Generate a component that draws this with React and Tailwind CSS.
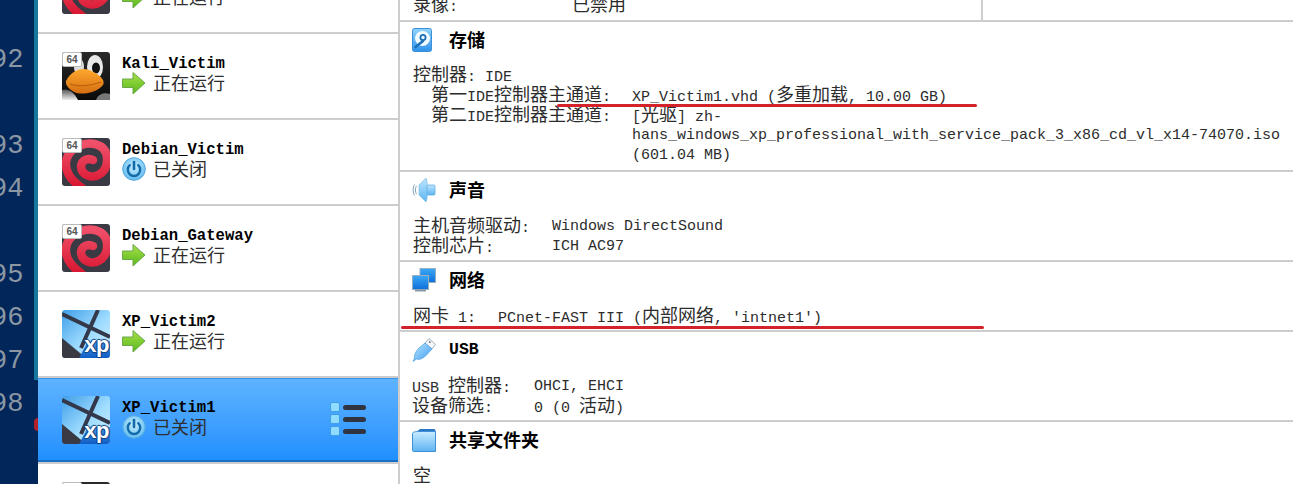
import React from "react";

const MONO = "font-['Liberation_Mono',monospace]";

function T({ s, bold }) {
  const parts = s.split(/([\u3000-\uffff]+)/).filter(Boolean);
  return parts.map((p, i) =>
    /[\u3000-\uffff]/.test(p) ? (
      <span key={i} className={`font-['Noto_Sans_CJK_SC',sans-serif] text-[18px] ${bold ? "font-bold" : "font-normal"}`}>{p}</span>
    ) : (
      <span key={i} className={`${MONO} ${bold ? "text-[16.5px] font-bold" : "text-[15px] font-normal"}`}>{p}</span>
    )
  );
}

function Line({ children, label, value, labelW, indent }) {
  return (
    <div className={`h-5 leading-5 whitespace-pre flex overflow-visible text-[#2c2c2c] ${indent ? "pl-[18px]" : ""}`}>
      {label !== undefined && <div className={labelW}><T s={label} /></div>}
      <div><T s={value !== undefined ? value : children} /></div>
    </div>
  );
}

function Badge() {
  return (
    <div className="absolute left-0 top-0 w-5 h-[15px] bg-white border border-[#bbb] rounded-[2px] flex items-center justify-center text-[10px] font-bold text-[#555] font-['Liberation_Sans',sans-serif] leading-none">
      64
    </div>
  );
}

function Debian() {
  return (
    <div className="relative w-12 h-12 shrink-0">
      <svg width="48" height="48" viewBox="0 0 48 48">
        <defs>
          <linearGradient id="deb" x1="0" y1="0" x2="0" y2="1">
            <stop offset="0" stopColor="#f0506a" />
            <stop offset="1" stopColor="#d8142f" />
          </linearGradient>
        </defs>
        <rect width="48" height="48" rx="3" fill="#3a3a44" />
        <path d="M20 50C8 42 1 31 5 20C9 8 27 2 38 8C48 14 47 30 38 36C31 41 20 38 19 29C19 23 25 19 31 22" fill="none" stroke="url(#deb)" strokeWidth="8.5" strokeLinecap="round" />
      </svg>
      <Badge />
    </div>
  );
}

function Kali() {
  return (
    <div className="relative w-12 h-12 shrink-0">
      <svg width="48" height="48" viewBox="0 0 48 48">
        <defs>
          <linearGradient id="bk" x1="0" y1="0" x2="0" y2="1">
            <stop offset="0" stopColor="#2a2a2a" />
            <stop offset="1" stopColor="#0a0a0a" />
          </linearGradient>
          <linearGradient id="bk2" x1="0" y1="0" x2="0" y2="1">
            <stop offset="0" stopColor="#ffa92e" />
            <stop offset="1" stopColor="#d46d10" />
          </linearGradient>
          <linearGradient id="wh" x1="0" y1="0" x2="0" y2="1">
            <stop offset="0" stopColor="#555" />
            <stop offset="1" stopColor="#eee" />
          </linearGradient>
        </defs>
        <rect width="48" height="48" rx="3" fill="url(#bk)" />
        <path d="M0 38C6 36 12 40 16 48H0Z" fill="url(#wh)" />
        <path d="M48 42C42 40 36 42 34 48H48Z" fill="#777" />
        <ellipse cx="33" cy="15" rx="8" ry="12" fill="#e8e8e8" />
        <ellipse cx="34" cy="16" rx="4" ry="5.5" fill="#111" />
        <ellipse cx="17" cy="15" rx="5" ry="9" fill="#ddd" />
        <path d="M4 29C9 19 19 15 27 18C35 21 44 27 41 33C36 40 20 44 12 40C8 38 3 33 4 29Z" fill="url(#bk2)" />
        <path d="M8 32C16 35 28 34 39 30" fill="none" stroke="#b85a0a" strokeWidth="1" />
      </svg>
      <Badge />
    </div>
  );
}

function Xp() {
  return (
    <div className="relative w-12 h-12 shrink-0">
      <svg width="48" height="48" viewBox="0 0 48 48">
        <defs>
          <linearGradient id="xpb" x1="0" y1="0" x2="1" y2="1">
            <stop offset="0" stopColor="#3f9fe8" />
            <stop offset="0.55" stopColor="#9fdcff" />
            <stop offset="1" stopColor="#d8f2ff" />
          </linearGradient>
          <linearGradient id="xpc" x1="0" y1="0" x2="0" y2="1">
            <stop offset="0" stopColor="#4a9fe8" />
            <stop offset="1" stopColor="#0f5cc4" />
          </linearGradient>
        </defs>
        <rect width="48" height="48" rx="3" fill="url(#xpb)" />
        <path d="M0 28L24 48H3C1 48 0 47 0 45Z" fill="#3a3a44" />
        <path d="M0 4L48 27" stroke="#33384a" strokeWidth="4" />
        <path d="M36 0L19 38" stroke="#33384a" strokeWidth="4" />
        <path d="M17 48L25 33C32 30 42 30 48 31V45C48 47 47 48 45 48Z" fill="url(#xpc)" />
      </svg>
      <span className="absolute right-[1px] bottom-[4px] text-white font-bold text-[22px] leading-[18px] tracking-[-0.5px] font-['Liberation_Sans',sans-serif] [text-shadow:1px_0_1px_#0f3f80,-1px_0_1px_#0f3f80,0_1px_1px_#0f3f80,0_-1px_1px_#0f3f80]">xp</span>
    </div>
  );
}

function Running() {
  return (
    <svg width="24" height="24" viewBox="0 0 24 24">
      <defs>
        <linearGradient id="ar" x1="0" y1="0" x2="0" y2="1">
          <stop offset="0" stopColor="#a8e04a" />
          <stop offset="1" stopColor="#58b81c" />
        </linearGradient>
      </defs>
      <path d="M0.5 8H11V1.5L23 12L11 23V16.5H0.5Z" fill="url(#ar)" stroke="#6aa84a" strokeWidth="1" strokeLinejoin="round" />
    </svg>
  );
}

function Off() {
  return (
    <svg width="24" height="24" viewBox="0 0 24 24">
      <defs>
        <radialGradient id="pw" cx="0.5" cy="0.4" r="0.6">
          <stop offset="0" stopColor="#c8eeff" />
          <stop offset="1" stopColor="#62bcf0" />
        </radialGradient>
      </defs>
      <circle cx="12" cy="12" r="11.3" fill="url(#pw)" stroke="#52a8dc" strokeWidth="1" />
      <path d="M7.8 8.2A6.2 6.2 0 1 0 16.2 8.2" fill="none" stroke="#126aa8" strokeWidth="2.4" strokeLinecap="round" />
      <path d="M12 5V12" stroke="#126aa8" strokeWidth="2.6" strokeLinecap="round" />
    </svg>
  );
}

function Details() {
  return (
    <div className="flex flex-col gap-[2px]">
      {[0, 1, 2].map((i) => (
        <div key={i} className="flex items-center gap-[3px]">
          <div className="w-[10px] h-[10px] rounded-[2px] bg-[#8fdcff] border border-[#3f9ee6]" />
          <div className="w-[23px] h-[5px] rounded-[3px] bg-[#2f3440]" />
        </div>
      ))}
    </div>
  );
}

function Row({ name, status, icon, selected }) {
  return (
    <div className={selected
      ? "h-[84px] border-t border-t-[#3a94e8] border-b-2 border-b-[#1570c8] bg-gradient-to-b from-[#5eb3ff] to-[#1f8fff] pl-6 pt-[17px] flex relative"
      : "h-[86px] border-b-2 border-b-[#cdcdcd] pl-6 pt-[18px] flex"}>
      {icon}
      <div className="ml-3 -mt-[1px]">
        <div className={`h-[21px] pt-[3px] leading-[20px] text-[15.6px] font-bold text-black ${MONO}`}>{name}</div>
        <div className="flex items-center h-6 gap-[7px] -mt-[1px] text-[#2e2e2e]">
          {status === "on" ? <Running /> : <Off />}
          <span className="-mt-[2px] font-['Noto_Sans_CJK_SC',sans-serif] text-[18px] leading-6">{status === "on" ? "正在运行" : "已关闭"}</span>
        </div>
      </div>
      {selected && <div className="absolute left-[292px] top-[23px]"><Details /></div>}
    </div>
  );
}

function Storage() {
  return (
    <svg width="20" height="24" viewBox="0 0 20 24">
      <defs>
        <linearGradient id="st" x1="0" y1="0" x2="0" y2="1">
          <stop offset="0" stopColor="#8fd4ff" />
          <stop offset="1" stopColor="#2f92ea" />
        </linearGradient>
      </defs>
      <rect x="0.5" y="0.5" width="19" height="23" rx="2" fill="url(#st)" stroke="#3d8fd8" />
      <circle cx="10.5" cy="10.5" r="7.5" fill="#f2fbff" />
      <circle cx="11" cy="9.5" r="2.6" fill="none" stroke="#1d6fb8" strokeWidth="1.8" />
      <path d="M3.5 19L11 13" stroke="#1d6fb8" strokeWidth="2.6" strokeLinecap="round" />
    </svg>
  );
}

function Sound() {
  return (
    <svg width="24" height="24" viewBox="0 0 24 24">
      <defs>
        <linearGradient id="so" x1="0" y1="0" x2="0" y2="1">
          <stop offset="0" stopColor="#bde6ff" />
          <stop offset="1" stopColor="#5db6f2" />
        </linearGradient>
      </defs>
      <path d="M7 7V17L14 24C16 20 16 4 14 0Z" fill="url(#so)" stroke="#7ebee8" strokeWidth="0.7" />
      <rect x="15" y="7" width="8" height="10" rx="1" fill="url(#so)" stroke="#5aa8e0" strokeWidth="0.7" />
      <path d="M4.5 8C3 10 3 14 4.5 16M2.5 6.5C0.6 9.5 0.6 14.5 2.5 17.5" fill="none" stroke="#7a9ab0" strokeWidth="0.9" />
    </svg>
  );
}

function Network() {
  return (
    <svg width="24" height="24" viewBox="0 0 24 24">
      <defs>
        <linearGradient id="nw" x1="0" y1="0" x2="0" y2="1">
          <stop offset="0" stopColor="#3aa8f8" />
          <stop offset="1" stopColor="#0f6fd8" />
        </linearGradient>
      </defs>
      <rect x="8" y="0.5" width="15.5" height="14" fill="url(#nw)" stroke="#9ab0c0" />
      <rect x="0.5" y="7.5" width="16" height="14" fill="url(#nw)" stroke="#9ab0c0" />
      <rect x="3" y="21.5" width="11" height="2" fill="#8a9aa8" />
    </svg>
  );
}

function Usb() {
  return (
    <svg width="24" height="24" viewBox="0 0 24 24">
      <defs>
        <linearGradient id="us" x1="0" y1="0" x2="1" y2="1">
          <stop offset="0" stopColor="#b8e6ff" />
          <stop offset="1" stopColor="#3f9cf0" />
        </linearGradient>
      </defs>
      <path d="M17 0.5L23.5 6.5L20 11L13 5Z" fill="#f4f8fb" stroke="#8ea0ac" strokeWidth="0.8" />
      <rect x="16.8" y="3.3" width="2" height="1.6" fill="#778" transform="rotate(40 17.8 4.1)" />
      <path d="M13 5L20 11L13.5 18C10 21 7 22 4.5 21L1 23.5L2.5 20C2 17 4 13 7 10Z" fill="url(#us)" stroke="#4a9ce0" strokeWidth="0.7" />
    </svg>
  );
}

function Folder() {
  return (
    <svg width="24" height="24" viewBox="0 0 24 24">
      <defs>
        <linearGradient id="fo" x1="0" y1="0" x2="0" y2="1">
          <stop offset="0" stopColor="#c9ecff" />
          <stop offset="1" stopColor="#5cb4f2" />
        </linearGradient>
      </defs>
      <path d="M3 5L8 1H22C23 1 23.5 2 23.5 3V6H3Z" fill="#2a77c4" />
      <path d="M0.5 5.5C0.5 4 3 3.5 8 3.5H23.5V23.5H1.5C1 23.5 0.5 23 0.5 22.5Z" fill="url(#fo)" stroke="#3f8fd6" />
    </svg>
  );
}

function Section({ icon, title, h, children }) {
  return (
    <div className={`border-b-2 border-b-[#cdcdcd] pl-[12px] relative ${h}`}>
      <div className="flex items-center h-[36px]">
        <div className="w-[37px] shrink-0">{icon}</div>
        <div className="leading-none -mt-[2px]"><T s={title} bold /></div>
      </div>
      {children}
    </div>
  );
}

const nums = ["92", "", "93", "94", "", "95", "96", "97", "98"];

export default function App() {
  return (
    <div className="w-[1293px] h-[484px] overflow-hidden flex bg-white relative">
      <div className="w-[38px] shrink-0 bg-[#01265a] flex relative">
        <div className="w-[34px] shrink-0 pt-[39px]">
          {nums.map((n, i) => (
            <div key={i} className={`-ml-[9px] h-[43px] leading-[43px] text-[27px] text-[#8b97a2] ${MONO}`}>{n || "\u00a0"}</div>
          ))}
        </div>
        <div className="w-1 h-[380px] bg-[#17789b]" />
        <div className="absolute left-[34px] top-[418px] w-1 h-[13px] bg-[#b3202a] rounded-l-full" />
      </div>

      <div className="w-[362px] shrink-0 border-r-2 border-r-[#cdcdcd] -mt-[52px] h-[536px] overflow-hidden">
        <Row name="" status="on" icon={<Debian />} />
        <Row name="Kali_Victim" status="on" icon={<Kali />} />
        <Row name="Debian_Victim" status="off" icon={<Debian />} />
        <Row name="Debian_Gateway" status="on" icon={<Debian />} />
        <Row name="XP_Victim2" status="on" icon={<Xp />} />
        <Row name="XP_Victim1" status="off" icon={<Xp />} selected />
        <div className="h-[2px] bg-[#cdcdcd]" />
        <Row name="" status="on" icon={<Kali />} />
      </div>

      <div className="flex-1 min-w-0 relative">
        <div className="h-[22px] border-b-2 border-b-[#cdcdcd] flex">
          <div className="w-[583px] border-r-2 border-r-[#cdcdcd] pl-[13px]">
            <div className="-mt-[7px] flex h-5 leading-5 whitespace-pre text-[#2c2c2c]">
              <div className="w-[159px]"><T s="录像:" /></div>
              <T s="已禁用" />
            </div>
          </div>
        </div>

        <Section icon={<Storage />} title="存储" h="h-[150px]">
          <div className="pl-[1px] pt-[5px]">
            <Line value="控制器: IDE" />
            <Line indent label="第一IDE控制器主通道:" value="XP_Victim1.vhd (多重加载, 10.00 GB)" labelW="w-[201px]" />
            <Line indent label="第二IDE控制器主通道:" value="[光驱] zh-" labelW="w-[201px]" />
            <Line indent label="" value="hans_windows_xp_professional_with_service_pack_3_x86_cd_vl_x14-74070.iso" labelW="w-[201px]" />
            <Line indent label="" value="(601.04 MB)" labelW="w-[201px]" />
          </div>
        </Section>

        <Section icon={<Sound />} title="声音" h="h-[90px]">
          <div className="pl-[1px] pt-[6px]">
            <Line label="主机音频驱动:" value="Windows DirectSound" labelW="w-[139px]" />
            <Line label="控制芯片:" value="ICH AC97" labelW="w-[139px]" />
          </div>
        </Section>

        <Section icon={<Network />} title="网络" h="h-[70px]">
          <div className="pl-[1px] pt-[6px]">
            <Line label="网卡 1:" value="PCnet-FAST III (内部网络, 'intnet1')" labelW="w-[85px]" />
          </div>
        </Section>

        <Section icon={<Usb />} title="USB" h="h-[90px]">
          <div className="pt-[6px]">
            <Line label="USB 控制器:" value="OHCI, EHCI" labelW="w-[122px]" />
            <Line label="设备筛选:" value="0 (0 活动)" labelW="w-[122px]" />
          </div>
        </Section>

        <Section icon={<Folder />} title="共享文件夹" h="h-[90px]">
          <div className="pl-[1px] pt-[6px]">
            <Line value="空" />
          </div>
        </Section>

        <div className="absolute left-[157px] top-[104px] w-[420px] h-[3px] bg-[#d4222a] rounded-full" />
        <div className="absolute left-[1px] top-[326px] w-[583px] h-[3px] bg-[#d4222a] rounded-full" />
      </div>
    </div>
  );
}
